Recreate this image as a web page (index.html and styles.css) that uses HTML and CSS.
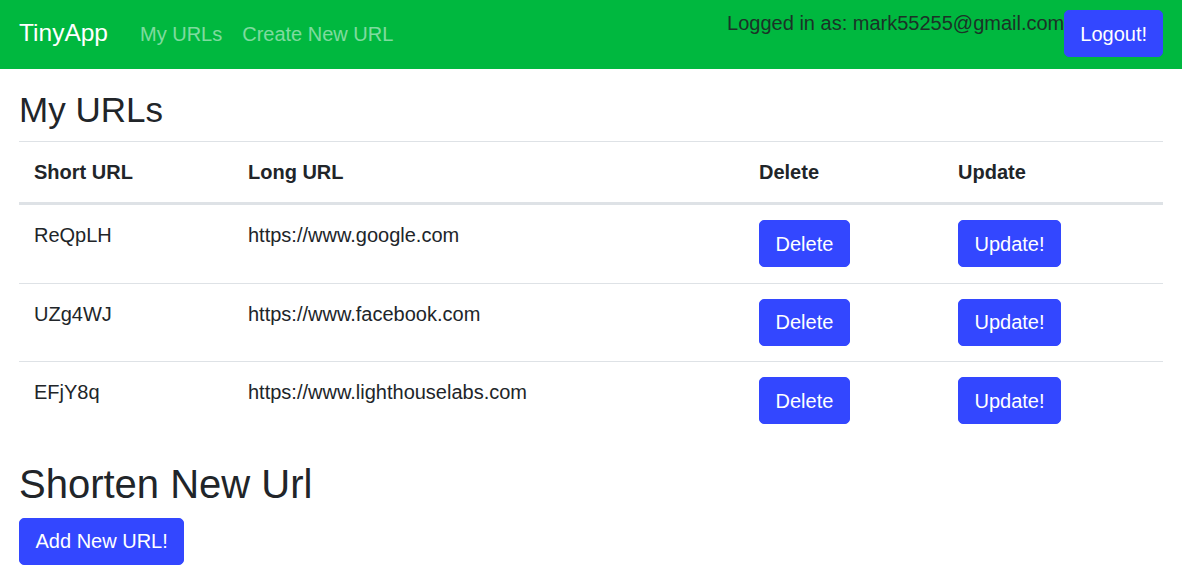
FILE: index.html
```html
<!DOCTYPE html>
<html lang="en">
<head>
<meta charset="utf-8">
<title>TinyApp</title>
<link rel="stylesheet" href="styles.css">
</head>
<body>
<nav class="navbar">
  <div class="nav-left">
    <a class="brand" href="#">TinyApp</a>
    <a class="nav-link" href="#">My URLs</a>
    <a class="nav-link" href="#">Create New URL</a>
  </div>
  <div class="nav-right">
    <span class="logged">Logged in as: mark55255@gmail.com</span>
    <button class="btn btn-logout">Logout!</button>
  </div>
</nav>
<main class="container">
  <h3 class="title">My URLs</h3>
  <table class="table">
    <colgroup>
      <col class="c1"><col class="c2"><col class="c3"><col class="c4">
    </colgroup>
    <thead>
      <tr><th>Short URL</th><th>Long URL</th><th>Delete</th><th>Update</th></tr>
    </thead>
    <tbody>
      <tr><td>ReQpLH</td><td>https://www.google.com</td><td><button class="btn">Delete</button></td><td><button class="btn">Update!</button></td></tr>
      <tr><td>UZg4WJ</td><td>https://www.facebook.com</td><td><button class="btn">Delete</button></td><td><button class="btn">Update!</button></td></tr>
      <tr><td>EFjY8q</td><td>https://www.lighthouselabs.com</td><td><button class="btn">Delete</button></td><td><button class="btn">Update!</button></td></tr>
    </tbody>
  </table>
  <h2 class="subtitle">Shorten New Url</h2>
  <button class="btn">Add New URL!</button>
</main>
</body>
</html>
```

FILE: styles.css
```css
* { box-sizing: border-box; }
html, body { margin: 0; padding: 0; }
body {
  font-family: "Liberation Sans", Arial, sans-serif;
  font-size: 20px;
  line-height: 1.5;
  color: #212529;
  background: #fff;
}
.navbar {
  display: flex;
  justify-content: space-between;
  align-items: flex-start;
  height: 69px;
  padding: 10px 19px 0 19px;
  background: #00b83f;
}
.nav-left {
  display: flex;
  align-items: center;
  align-self: center;
  margin-top: -12px;
}
.brand {
  color: #fff;
  font-size: 24.5px;
  text-decoration: none;
  margin-right: 22px;
}
.nav-link {
  color: rgba(255, 255, 255, 0.5);
  text-decoration: none;
  padding: 0 10px;
}
.nav-right {
  display: flex;
  align-items: flex-start;
}
.logged {
  color: #1b3327;
  line-height: 30px;
  margin-top: -2px;
}
.btn {
  font-family: inherit;
  font-size: 20px;
  line-height: 30px;
  color: #fff;
  background: #3347ff;
  border: 1px solid #3347ff;
  border-radius: 5px;
  padding: 7.5px 15.5px;
  cursor: pointer;
}
.btn-logout { padding: 7.5px 15px; }
.container {
  padding: 0 19px;
  margin-top: 20px;
}
.title {
  font-size: 35px;
  font-weight: 500;
  line-height: 1.2;
  margin: 0 0 10px;
}
.subtitle {
  font-size: 40px;
  font-weight: 500;
  line-height: 1.2;
  margin: 0 0 10px;
}
.table {
  width: 100%;
  border-collapse: collapse;
  margin-bottom: 20px;
}
.c1 { width: 214px; }
.c2 { width: 511px; }
.c3 { width: 199px; }
.c4 { width: 220px; }
.table th, .table td {
  text-align: left;
  vertical-align: top;
  padding: 15px;
  border-top: 1px solid #dee2e6;
}
.table td { padding-bottom: 15.5px; }
.table th { font-weight: 700; }
.table thead th {
  border-bottom: 3px solid #dee2e6;
}
.table tbody tr:first-child td { border-top: 0; }
```
